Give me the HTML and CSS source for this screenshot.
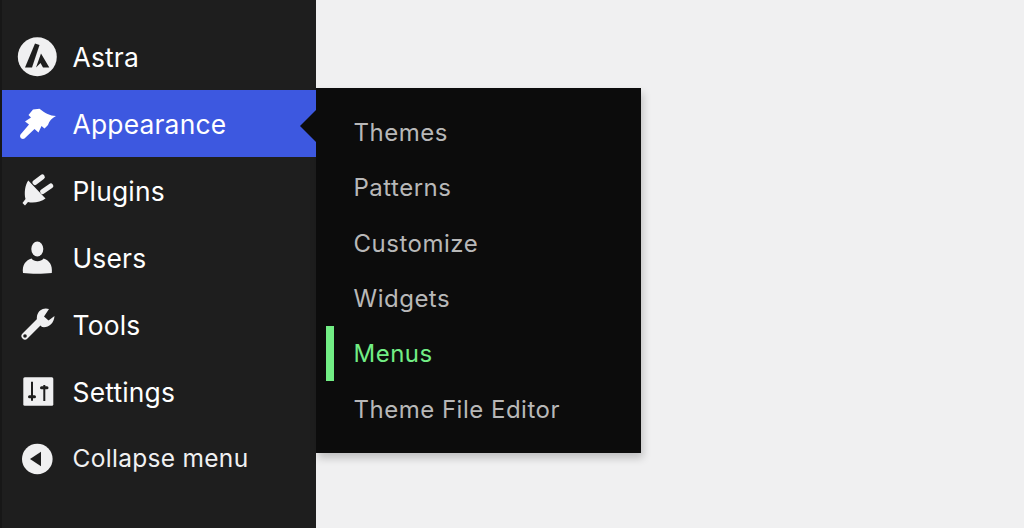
FILE: index.html
```html
<!DOCTYPE html>
<html lang="en">
<head>
  <meta charset="UTF-8">
  <meta name="viewport" content="width=device-width, initial-scale=1.0">
  <title>Appearance menu</title>
  <link rel="stylesheet" href="styles.css">
</head>
<body>
  <div class="layout">
    <nav class="sidebar">
      <a class="menu-item">
        <svg class="menu-icon" viewBox="0 0 40 40">
          <circle class="icon-fill" cx="20.3" cy="19.7" r="19.5"/>
          <path class="icon-dark" d="M18 6.500 L22.500 8 L15 30.500 L8 30.500 Z"/>
          <path class="icon-dark" d="M24 16.500 L32.300 30.500 L26 30.500 L23.500 26 L19 30.500 Z"/>
        </svg>
        <span>Astra</span>
      </a>
      <a class="menu-item active">
        <svg class="menu-icon" viewBox="0 0 40 40">
          <path class="icon-white" d="M16 5.500 L22.500 4.800 C28 9 33 12 39 12 C35 14 32 17 31 21 L27.500 24.500 L24.500 22 L21.500 28.500 L17.500 25 L7.500 34.500 C5 36 2 33.500 3.500 30.500 L12 20.500 L8 17.500 L14 13.500 L11.500 11 Z"/>
        </svg>
        <span>Appearance</span>
      </a>
      <a class="menu-item">
        <svg class="menu-icon" viewBox="0 0 40 40">
          <path class="icon-fill" d="M11.300 9.500 L28.500 27.500 C24 31 16 32.500 11 31 L8 34.500 L5.500 32 L8.500 28 C7 22 8 14 11.300 9.500 Z"/>
          <path class="icon-line" d="M18 11.500 L25.300 6 M25.700 20.500 L33.700 15"/>
        </svg>
        <span>Plugins</span>
      </a>
      <a class="menu-item">
        <svg class="menu-icon" viewBox="0 0 40 40">
          <ellipse class="icon-fill" cx="20.300" cy="11" rx="6" ry="7.500"/>
          <path class="icon-fill" d="M6 35 C4.800 27 9 22 14.500 20.500 C17 24 24 24 26.500 20.500 C32 22 35.800 27 34.800 35 C26 36 14 36 6 35 Z"/>
        </svg>
        <span>Users</span>
      </a>
      <a class="menu-item">
        <svg class="menu-icon" viewBox="0 0 40 40">
          <path class="icon-fill" d="M32 4 C27 2 21 5 20 11 C19.500 14 20 16 21 18 L25 22 C31 23 37 19 37.500 11 L31.500 15.500 L27 11.500 Z"/>
          <path class="icon-line wide" d="M8 31 L22 17"/>
          <circle class="icon-dark" cx="8" cy="31" r="1.800"/>
        </svg>
        <span>Tools</span>
      </a>
      <a class="menu-item">
        <svg class="menu-icon" viewBox="0 0 40 40">
          <rect class="icon-fill" x="6.300" y="5.300" width="30" height="28.400" rx="1.500"/>
          <path class="icon-slider" d="M15 9.700 V28.700 M27.300 13 V29"/>
          <path class="icon-knob" d="M12.500 24.700 H17.500 M24.500 15.700 H30"/>
        </svg>
        <span>Settings</span>
      </a>
      <a class="menu-item collapse">
        <svg class="menu-icon" viewBox="0 0 40 40">
          <circle class="icon-fill" cx="20.300" cy="21" r="15.300"/>
          <path class="icon-dark" d="M13 21 L24 13.700 L24 28.300 Z"/>
        </svg>
        <span>Collapse menu</span>
      </a>
    </nav>

    <ul class="flyout">
      <li class="flyout-item">Themes</li>
      <li class="flyout-item">Patterns</li>
      <li class="flyout-item">Customize</li>
      <li class="flyout-item">Widgets</li>
      <li class="flyout-item current">Menus</li>
      <li class="flyout-item">Theme File Editor</li>
    </ul>
  </div>
</body>
</html>
```

FILE: styles.css
```css
* {
  box-sizing: border-box;
}

html, body {
  height: 100%;
}

body {
  margin: 0;
  background-color: #f0f0f1;
  font-family: Inter, "Liberation Sans", sans-serif;
  overflow: hidden;
}

.layout {
  display: flex;
  align-items: flex-start;
  height: 528px;
}

.sidebar {
  width: 316px;
  height: 100%;
  padding-top: 23px;
  background-color: #1e1e1e;
  border-left: 2px solid #171717;
  flex-shrink: 0;
}

.menu-item {
  position: relative;
  display: flex;
  align-items: center;
  gap: 15.500px;
  height: 67px;
  padding-left: 15px;
  color: #fff;
  font-size: 26.400px;
  letter-spacing: 0.2px;
}

.menu-item.active {
  background-color: #3d58e0;
}

/* notch pointing at the open submenu */
.menu-item.active::after {
  content: "";
  position: absolute;
  right: 0;
  top: 20px;
  border-top: 16px solid transparent;
  border-bottom: 16px solid transparent;
  border-right: 16px solid #0c0c0c;
}

.menu-item.collapse {
  margin-top: -1px;
  color: #f0f0f1;
  font-size: 24.500px;
  letter-spacing: 0.3px;
}

.menu-icon {
  width: 40px;
  height: 40px;
  flex-shrink: 0;
}

.icon-fill {
  fill: #f0f0f1;
}

.icon-white {
  fill: #fff;
}

.icon-dark {
  fill: #1e1e1e;
}

.icon-line {
  fill: none;
  stroke: #f0f0f1;
  stroke-width: 5;
  stroke-linecap: round;
}

.icon-line.wide {
  stroke-width: 7;
}

.icon-slider {
  fill: none;
  stroke: #1e1e1e;
  stroke-width: 2;
}

.icon-knob {
  fill: none;
  stroke: #1e1e1e;
  stroke-width: 3;
  stroke-linecap: round;
}

.flyout {
  width: 325px;
  height: 365px;
  margin: 88px 0 0;
  padding: 17px 0 0 10px;
  list-style: none;
  background-color: #0c0c0c;
  box-shadow: 2px 5px 8px rgba(0, 0, 0, 0.2);
}

.flyout-item {
  display: flex;
  align-items: center;
  height: 55.300px;
  padding-left: 19.500px;
  border-left: 8px solid transparent;
  color: #b8b8b8;
  font-size: 24px;
  letter-spacing: 0.5px;
}

.flyout-item.current {
  border-left-color: #72ee85;
  color: #72ee85;
}
```
